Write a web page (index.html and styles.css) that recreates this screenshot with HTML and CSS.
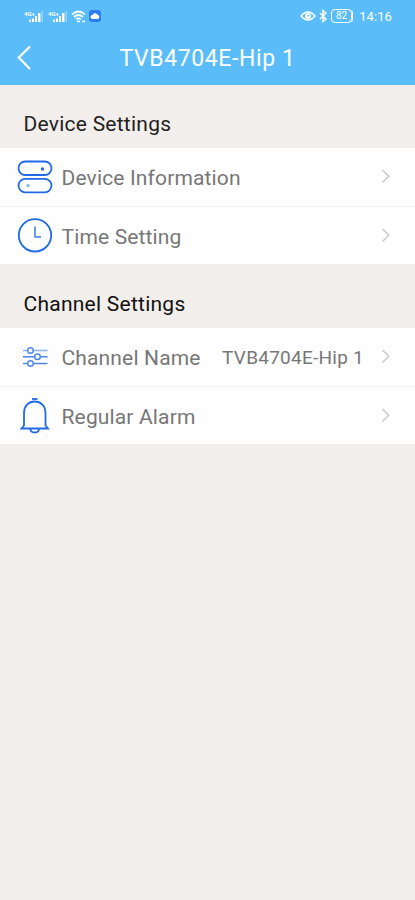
FILE: index.html
```html
<!DOCTYPE html>
<html lang="en">

<head>
    <meta charset="UTF-8">
    <meta name="viewport" content="width=device-width, initial-scale=1.0">
    <title>Device Settings</title>
    <link rel="stylesheet" href="styles.css">
</head>

<body>
    <div class="header">
        <div class="status-bar">
            <div class="status-left">
                <div class="signal">
                    <span>4G+</span>
                    <svg width="20" height="14" viewBox="0 0 20 14" fill="#fff">
                        <path d="M5 10.500h2v2.500H5zM8 9.500h2V13H8zM11 7h2v6h-2zM14 4h2.500v9H14z" />
                        <path d="M17.500 2H19v11h-1.500z" opacity=".35" />
                    </svg>
                </div>
                <div class="signal">
                    <span>4G+</span>
                    <svg width="20" height="14" viewBox="0 0 20 14" fill="#fff">
                        <path d="M5 10.500h2v2.500H5zM8 9.500h2V13H8zM11 7h2v6h-2zM14 4h2.500v9H14z" />
                        <path d="M17.500 2H19v11h-1.500z" opacity=".35" />
                    </svg>
                </div>
                <svg class="wifi" width="15" height="13" viewBox="0 0 15 13" fill="none" stroke="#fff" stroke-width="1.700">
                    <path d="M1 4.500q6.500-6 13 0M3 7q4.500-4 9 0M5.200 9.300q2.300-2 4.600 0" />
                    <path d="M6 11.500h3M11 11.500h3" />
                </svg>
                <svg class="cloud" width="12" height="12" viewBox="0 0 12 12">
                    <rect width="12" height="12" rx="3" fill="#2f7ded" />
                    <path d="M3.500 9a2 2 0 0 1 0-4 2.700 2.700 0 0 1 5-.3A2.200 2.200 0 0 1 8.700 9z" fill="#fff" />
                </svg>
            </div>
            <div class="status-right">
                <svg width="16" height="12" viewBox="0 0 16 12" fill="none" stroke="#fff" stroke-width="1.500">
                    <path d="M1 6q7-8 14 0-7 8-14 0z" />
                    <circle cx="8" cy="6" r="2.300" fill="#fff" />
                    <circle cx="8.500" cy="5.500" r="1" fill="#5abdfa" stroke="none" />
                </svg>
                <svg class="bluetooth" width="9" height="14" viewBox="0 0 9 14" fill="none" stroke="#fff" stroke-width="1.400">
                    <path d="M1 4l6 6-3 2.500v-11L7 4l-6 6" />
                </svg>
                <div class="battery">82</div>
                <span class="time">14:16</span>
            </div>
        </div>
        <div class="title-bar">
            <svg class="back" width="16" height="26" viewBox="0 0 16 26" fill="none" stroke="#fff" stroke-width="2.200">
                <path d="M14 1.500L2.800 12.500 14 24" />
            </svg>
            <h1>TVB4704E-Hip 1</h1>
        </div>
    </div>

    <h2 class="section-title">Device Settings</h2>
    <div class="list">
        <div class="item">
            <svg class="icon" width="36" height="36" viewBox="0 0 36 36" fill="none" stroke="#216ae6" stroke-width="1.800">
                <rect x="1.500" y="2.500" width="33" height="13.500" rx="6.700" />
                <rect x="1.500" y="19.800" width="33" height="13.500" rx="6.700" />
                <circle cx="25.500" cy="10" r="1.700" fill="#216ae6" stroke="none" />
                <circle cx="11" cy="26.500" r="1.700" fill="#8eb4f3" stroke="none" />
            </svg>
            <span class="label">Device Information</span>
            <svg class="arrow" width="10" height="16" viewBox="0 0 10 16"><path d="M1.500 1L7.800 7.200 1.500 13.500" /></svg>
        </div>
        <div class="item">
            <svg class="icon" width="36" height="36" viewBox="0 0 36 36" fill="none" stroke="#216ae6" stroke-width="1.800">
                <circle cx="18" cy="17.300" r="16.200" />
                <path d="M18 8.500v10.300h6" stroke="#5a90ef" />
            </svg>
            <span class="label">Time Setting</span>
            <svg class="arrow" width="10" height="16" viewBox="0 0 10 16"><path d="M1.500 1L7.800 7.200 1.500 13.500" /></svg>
        </div>
    </div>

    <h2 class="section-title channel">Channel Settings</h2>
    <div class="list">
        <div class="item">
            <svg class="icon" width="36" height="36" viewBox="0 0 36 36" fill="none" stroke="#4d88eb" stroke-width="1.500">
                <path d="M6 11.500h4.500M16.500 11.500h14" stroke="#8bb1f4" />
                <path d="M6 17.700h11.500M23.500 17.700h7M6 24.500h4.500M16.500 24.500h14" />
                <circle cx="13.500" cy="11.500" r="2.800" />
                <circle cx="20.500" cy="17.700" r="2.800" />
                <circle cx="13.500" cy="24.500" r="2.800" />
            </svg>
            <span class="label">Channel Name</span>
            <span class="value">TVB4704E-Hip 1</span>
            <svg class="arrow" width="10" height="16" viewBox="0 0 10 16"><path d="M1.500 1L7.800 7.200 1.500 13.500" /></svg>
        </div>
        <div class="item">
            <svg class="icon" width="36" height="36" viewBox="0 0 36 36" fill="none" stroke="#216ae6" stroke-width="1.800">
                <path d="M15 1h5.500" />
                <path d="M7 27.500V15C7 8 11.500 3.500 17.700 3.500S28.500 8 28.500 15v12.500l2.500 3H4.500z" />
                <path d="M13.500 31q0 3.500 4.200 3.500t4.200-3.500" />
            </svg>
            <span class="label">Regular Alarm</span>
            <svg class="arrow" width="10" height="16" viewBox="0 0 10 16"><path d="M1.500 1L7.800 7.200 1.500 13.500" /></svg>
        </div>
    </div>
</body>

</html>
```

FILE: styles.css
```css
body {
    font-family: Roboto, "Liberation Sans", sans-serif;
    margin: 0;
    padding: 0;
    background-color: #f2eeeb;
}

.header {
    height: 85px;
    background-color: #5abdfa;
    color: white;
}

.status-bar {
    display: flex;
    justify-content: space-between;
    height: 32px;
    padding: 0 23px 0 24px;
}

.status-left,
.status-right {
    display: flex;
    align-items: center;
}

.signal {
    display: flex;
    width: 24px;
}

.signal span {
    width: 12px;
    margin-right: -12px;
    font-size: 6px;
    line-height: 7px;
    font-weight: bold;
}

.signal svg {
    margin-top: -1px;
}

.wifi {
    margin-left: -1px;
}

.cloud {
    margin-left: 3px;
}

.bluetooth {
    margin-left: 3px;
}

.battery {
    box-sizing: border-box;
    width: 21px;
    height: 14px;
    margin: 0 7px 0 3px;
    border: 1px solid white;
    border-radius: 4px;
    font-size: 10px;
    line-height: 12px;
    text-align: center;
    box-shadow: 2px 0 0 -1px white;
}

.time {
    font-size: 13px;
    letter-spacing: 0.1px;
}

.title-bar {
    display: flex;
    align-items: center;
    height: 52px;
    padding: 0 16px;
}

.title-bar h1 {
    flex: 1;
    margin: 0 16px 0 0;
    font-size: 23px;
    font-weight: normal;
    letter-spacing: 0.6px;
    line-height: 30px;
    padding-top: 2px;
    text-align: center;
}

.section-title {
    height: 63px;
    margin: 0;
    padding: 8px 23.5px 0;
    box-sizing: border-box;
    font-size: 21px;
    font-weight: normal;
    line-height: 63px;
    letter-spacing: 0.25px;
    color: #222;
}

.channel {
    height: 64px;
    padding-top: 9px;
    color: #111;
}

.list {
    background-color: #fefefe;
}

.item {
    display: flex;
    align-items: center;
    box-sizing: border-box;
    height: 58px;
    padding: 0 24px 0 17px;
}

.item + .item {
    border-top: 1px solid #f3f3f3;
}

.icon {
    flex-shrink: 0;
}

.label {
    flex: 1;
    margin-left: 8.5px;
    padding-top: 2px;
    font-size: 21px;
    letter-spacing: 0.15px;
    white-space: nowrap;
    color: #777;
}

.value {
    margin-right: 17px;
    font-size: 19px;
    letter-spacing: 0.25px;
    white-space: nowrap;
    color: #777;
}

.arrow {
    flex-shrink: 0;
    fill: none;
    stroke: #cacaca;
    stroke-width: 1.5;
}
```
